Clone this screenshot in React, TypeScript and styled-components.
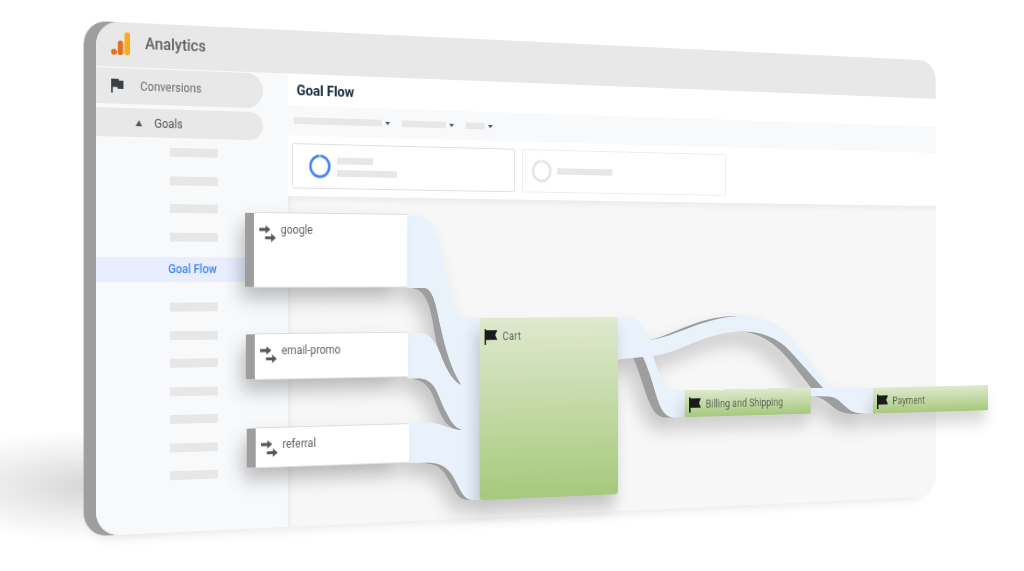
import React from "react";
import styled, { createGlobalStyle, css } from "styled-components";

const GlobalStyle = createGlobalStyle`
  *, *::before, *::after { box-sizing: border-box; }
  body {
    margin: 0;
    background: #fff;
    font-family: Roboto, "Liberation Sans", sans-serif;
    font-size: 12px;
    line-height: 16px;
    color: #5f6368;
  }
  button { font: inherit; color: inherit; border: 0; background: none; padding: 0; text-align: left; }
  a { color: inherit; text-decoration: none; }
`;

/* Both the window and the flow chart lie in the same tilted plane. */
const tilted = css`
  transform: perspective(1768px) rotateY(18deg);
  transform-origin: left center;
`;

const Stage = styled.div`
  position: relative;
  overflow: hidden;
  padding: 21px 0 36px 96px;
`;

const GroundShadow = styled.div`
  position: absolute;
  left: -90px;
  bottom: 30px;
  width: 380px;
  height: 112px;
  background: radial-gradient(closest-side, rgba(60, 60, 70, 0.22), rgba(60, 60, 70, 0.09) 55%, transparent);
`;

const Scene = styled.div`
  position: relative;
`;

const Window = styled.main`
  ${tilted}
  width: 102vw;
  border-radius: 24px;
  overflow: hidden;
  background: #f7f7f7;
  box-shadow: -13px 0 0 #9e9e9e, -10px 6px 12px -4px rgba(0, 0, 0, 0.1);
`;

const Header = styled.header`
  display: flex;
  align-items: center;
  gap: 16px;
  height: 45px;
  padding: 0 0 3px 16px;
  background: #e8e8e8;
`;

const Brand = styled.span`
  font-size: 16px;
  line-height: 24px;
  font-weight: 500;
  color: #5f6063;
`;

const Body = styled.div`
  display: grid;
  grid-template-columns: 209px 1fr;
`;

const Sidebar = styled.nav`
  display: flex;
  flex-direction: column;
  padding: 1px 0 53px;
  background: #f8f9fb;
`;

const NavPill = styled.button<{ $nested?: boolean }>`
  display: flex;
  align-items: center;
  gap: ${(p) => (p.$nested ? 13 : 18)}px;
  width: 181px;
  height: ${(p) => (p.$nested ? 29 : 36)}px;
  margin-bottom: ${(p) => (p.$nested ? 10 : 4)}px;
  padding-left: ${(p) => (p.$nested ? 42 : 16)}px;
  border-radius: 0 18px 18px 0;
  background: #e8e8e8;
  color: ${(p) => (p.$nested ? "#4f5256" : "#6a6c70")};
`;

const BarList = styled.div<{ $height: number }>`
  display: flex;
  flex-direction: column;
  justify-content: space-between;
  height: ${(p) => p.$height}px;
  padding-left: 79px;
`;

const Bar = styled.span<{ $width: number; $height?: number }>`
  display: block;
  width: ${(p) => p.$width}px;
  height: ${(p) => p.$height ?? 7}px;
  background: #e7e7e7;
`;

const ActiveLink = styled.a`
  display: block;
  margin: 16px 0 21px;
  padding-left: 77px;
  line-height: 25px;
  font-weight: 500;
  color: #4285f4;
  background: #e8eefd;
`;

const Content = styled.div`
  display: flex;
  flex-direction: column;
`;

const Title = styled.h1`
  margin: 0;
  padding: 2px 0 0 10px;
  font-size: 15px;
  line-height: 31px;
  font-weight: 700;
  color: #14293a;
  background: #fff;
`;

const Filters = styled.div`
  display: flex;
  align-items: center;
  gap: 14px;
  height: 31px;
  padding-left: 7px;
  background: #f8f9fb;
`;

const Filter = styled.button`
  display: flex;
  align-items: center;
  gap: 4px;
`;

const Segments = styled.div`
  display: flex;
  gap: 9px;
  padding: 8px 5px;
  background: #fff;
`;

const Segment = styled.button<{ $empty?: boolean }>`
  display: flex;
  align-items: center;
  gap: 7px;
  width: 263px;
  height: 47px;
  padding-left: ${(p) => (p.$empty ? 11 : 18)}px;
  border: ${(p) => (p.$empty ? "1px dotted #dcdcdc" : "1px solid #dedede")};
  border-radius: 2px;
`;

const Lines = styled.span`
  display: flex;
  flex-direction: column;
  gap: 6px;
`;

const Canvas = styled.div`
  flex: 1;
  background: #f7f7f7;
  box-shadow: inset 5px 6px 8px -4px rgba(0, 0, 0, 0.07);
`;

const FlowLayer = styled.section`
  ${tilted}
  position: absolute;
  inset: 0;
`;

const Ribbons = styled.svg`
  position: absolute;
  left: -96px;
  top: -21px;
  filter: drop-shadow(-6px 12px 9px rgba(0, 0, 0, 0.2));
`;

type Box = { $x: number; $y: number; $w: number; $h: number };

const Node = styled.div<Box>`
  position: absolute;
  left: ${(p) => p.$x}px;
  top: ${(p) => p.$y}px;
  width: ${(p) => p.$w}px;
  height: ${(p) => p.$h}px;
  display: flex;
  align-items: flex-start;
`;

const SourceNode = styled(Node)`
  gap: 5px;
  padding: 9px 6px;
  background: #fff;
  border-radius: 1px;
  box-shadow: -10px 0 0 #9e9e9e, 0 -1px 0 #dcdcdc, 0 1px 0 #e2e2e2, -14px 12px 20px rgba(0, 0, 0, 0.26);
`;

const StepNode = styled(Node)<{ $slim?: boolean }>`
  gap: 6px;
  padding: ${(p) => (p.$slim ? 8 : 12)}px 6px;
  color: #5c6657;
  border-radius: ${(p) => (p.$slim ? 0 : 3)}px;
  background: linear-gradient(#dfe9cf, #a6c97c);
  box-shadow: -4px 14px 18px rgba(0, 0, 0, ${(p) => (p.$slim ? 0.16 : 0.2)});
`;

const Logo = () => (
  <svg width="20" height="23" viewBox="0 0 20 23" aria-hidden="true">
    <circle cx="3" cy="20" r="3" fill="#e2711d" />
    <rect x="7" y="8.500" width="5.700" height="14.500" rx="2.800" fill="#e2711d" />
    <rect x="14.200" y="0" width="5.800" height="23" rx="2.800" fill="#f9ab1c" />
  </svg>
);

const FlagIcon = () => (
  <svg width="13" height="14" viewBox="5 4 15 17" preserveAspectRatio="none" aria-hidden="true">
    <path d="M14.4 6L14 4H5v17h2v-7h5.600l.4 2h7V6z" fill="#3c4043" />
  </svg>
);

const TriangleUp = () => (
  <svg width="7" height="6" viewBox="0 0 7 6" aria-hidden="true">
    <path d="M3.500 0L7 6H0z" fill="#4f5256" />
  </svg>
);

const Caret = () => (
  <svg width="6" height="4" viewBox="0 0 6 4" aria-hidden="true">
    <path d="M0 0h6L3 3.500z" fill="#55585c" />
  </svg>
);

const Ring = ({ color }: { color: string }) => (
  <svg width="25" height="25" viewBox="0 0 25 25" aria-hidden="true">
    <circle cx="12.500" cy="12.500" r="10.800" fill="none" stroke={color} strokeWidth="2.800" />
    <path d="M12.500 0V4" stroke="#fff" strokeOpacity="0.75" strokeWidth="1.200" />
  </svg>
);

const ArrowsIcon = () => (
  <svg width="19" height="22" viewBox="0 0 19 22" aria-hidden="true">
    <path
      d="M0 6.200h7V3.400l5.500 4.400L7 12.200V9.400H0zM6.500 14.900h6.700v-2.800l5.500 4.400-5.500 4.400v-2.800H6.500z"
      fill="#58595b"
    />
  </svg>
);

const StepFlag = () => (
  <svg width="16" height="17" viewBox="0 0 16 17" aria-hidden="true">
    <path d="M0 0h1.800v1.300H15.500L13 6.500l2.500 5.200H1.800V17H0z" fill="#1b1b1b" />
  </svg>
);

const sources = [
  { label: "google", y: 190, h: 76, x: 171 },
  { label: "email-promo", y: 315, h: 46, x: 172 },
  { label: "referral", y: 412, h: 40, x: 173 },
];

const steps = [
  { label: "Cart", x: 434, y: 300, w: 173, h: 196, slim: false },
  { label: "Billing and Shipping", x: 694, y: 383, w: 171, h: 30, slim: true },
  { label: "Payment", x: 953, y: 385, w: 169, h: 30, slim: true },
];

const filters = [101, 52, 23];

function FlowRibbons() {
  return (
    <Ribbons width="1024" height="571" viewBox="0 0 1024 571" aria-hidden="true">
      <g fill="#9e9e9e">
        <path d="M633 357L645 356C650 372 654 388 658 401C662 413 666 417 674 417.500H665C655 417 651 407 646 394C641 380 638 368 633 357Z" />
        <path d="M646 341C675 335 697 316 737 316L745 320L690 334L650 344Z" />
        <path d="M738 331C764 333 777 346 790 361L812 389H826L780 340L755 329Z" />
        <path d="M814 396C830 399 833 414 853 414H864L845 400L825 394Z" />
      </g>
      <g fill="#e9f2fb">
        <path d="M407 215.500L418 216C433 216 437 236 443 262C449 290 454 317.500 466 317.500H481V430L461 384C449 366 443 340 437 312C434 298 431 288 421 288H407Z" />
        <path d="M407 333H420C432 333 436 345 443 358C449 372 455 381 461 384L481 380V430H462C446 425 443 402 435 390C431 382 426 378.500 418 378.500H407Z" />
        <path d="M408 423.500L428 422.500C440 422.500 448 429 462 430L481 380L483 500H472C462 500 457 480 451 473C445 465 438 462.700 428 462.700L408 463Z" />
        <path d="M617 317H631C641 317 645 330 648 340C675 338 704 316 743 316C784 316 797 346 813 366C822 377 827 388 838 388H874V413.500H862C844 413 843 397 828 396.500L811 396V388H823L790 351C776 336 759 331.500 743 331.500C704 331.500 684 352 653 356C657 367 660 378 664 384C668 390 673 390.300 679 390.300H686V417.500H674C664 417 660 406 656 394C652 381 648 368 643 357L617 359.500Z" />
      </g>
      <g fill="#9e9e9e">
        <path d="M412 288H424C434 288 437 312 441 329C446 352 452 371 461 385C448 378 442 357 437 345C432 322 431 290 412 288Z" />
        <path d="M412 378.700L420 378.500C437 380 438 398 446 412C451 422 455 428 462 430C448 430 443 420 437 406C432 392 428 381 412 378.700Z" />
        <path d="M418 463L428 462.700C440 463 447 467 453 477C459 487 463 500 472 500H468C458 500 455 491 450 482C443 470 440 463 418 463Z" />
      </g>
    </Ribbons>
  );
}

export default function App() {
  return (
    <>
      <GlobalStyle />
      <Stage>
        <GroundShadow />
        <Scene>
          <Window>
            <Header>
              <Logo />
              <Brand>Analytics</Brand>
            </Header>
            <Body>
              <Sidebar>
                <NavPill type="button">
                  <FlagIcon />
                  Conversions
                </NavPill>
                <NavPill type="button" $nested>
                  <TriangleUp />
                  Goals
                </NavPill>
                <BarList $height={95}>
                  {Array.from({ length: 4 }, (_, i) => (
                    <Bar key={i} $width={52} $height={9} />
                  ))}
                </BarList>
                <ActiveLink href="#goal-flow">Goal Flow</ActiveLink>
                <BarList $height={180}>
                  {Array.from({ length: 7 }, (_, i) => (
                    <Bar key={i} $width={52} $height={9} />
                  ))}
                </BarList>
              </Sidebar>
              <Content>
                <Title>Goal Flow</Title>
                <Filters>
                  {filters.map((width) => (
                    <Filter key={width} type="button">
                      <Bar $width={width} />
                      <Caret />
                    </Filter>
                  ))}
                </Filters>
                <Segments>
                  <Segment type="button">
                    <Ring color="#4285f4" />
                    <Lines>
                      <Bar $width={42} />
                      <Bar $width={70} />
                    </Lines>
                  </Segment>
                  <Segment type="button" $empty>
                    <Ring color="#e3e3e3" />
                    <Bar $width={70} />
                  </Segment>
                </Segments>
                <Canvas />
              </Content>
            </Body>
          </Window>
          <FlowRibbons />
          <FlowLayer>
            {sources.map((s) => (
              <SourceNode key={s.label} $x={s.x} $y={s.y} $w={176} $h={s.h}>
                <ArrowsIcon />
                <span>{s.label}</span>
              </SourceNode>
            ))}
            {steps.map((s) => (
              <StepNode key={s.label} $x={s.x} $y={s.y} $w={s.w} $h={s.h} $slim={s.slim}>
                <StepFlag />
                <span>{s.label}</span>
              </StepNode>
            ))}
          </FlowLayer>
        </Scene>
      </Stage>
    </>
  );
}
